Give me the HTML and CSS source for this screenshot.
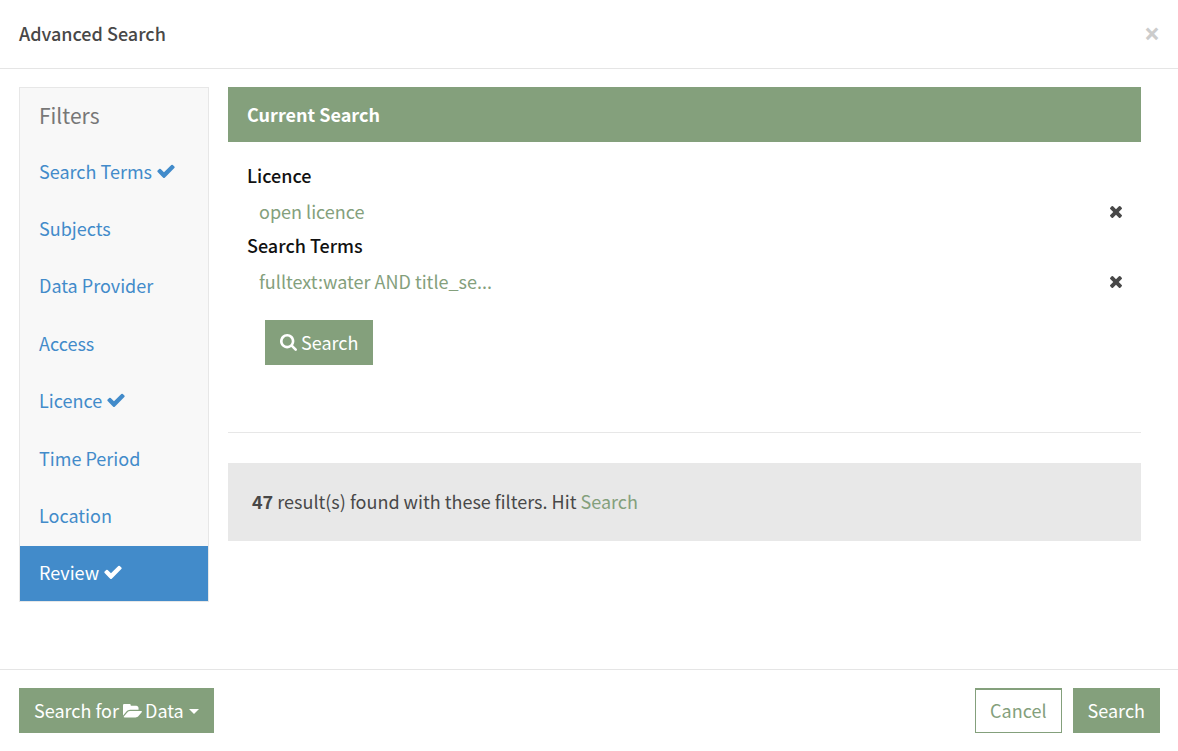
FILE: index.html
```html
<!DOCTYPE html>
<html lang="en">
<head>
<meta charset="utf-8">
<meta name="viewport" content="width=device-width, initial-scale=1">
<title>Advanced Search</title>
<link rel="stylesheet" href="styles.css">
</head>
<body>
<svg class="sprite" aria-hidden="true">
  <symbol id="check" viewBox="0 0 1792 1792"><path d="M1671 566q0 40-28 68l-724 724-136 136q-28 28-68 28t-68-28l-136-136-362-362q-28-28-28-68t28-68l136-136q28-28 68-28t68 28l294 295 656-657q28-28 68-28t68 28l136 136q28 28 28 68z"/></symbol>
  <symbol id="times" viewBox="302 366 1188 1188"><path d="M1490 1322q0 40-28 68l-136 136q-28 28-68 28t-68-28l-294-294-294 294q-28 28-68 28t-68-28l-136-136q-28-28-28-68t28-68l294-294-294-294q-28-28-28-68t28-68l136-136q28-28 68-28t68 28l294 294 294-294q28-28 68-28t68 28l136 136q28 28 28 68t-28 68l-294 294 294 294q28 28 28 68z"/></symbol>
  <symbol id="search" viewBox="64 128 1664 1664"><path d="M1216 832q0-185-131.500-316.500t-316.500-131.500-316.500 131.500-131.500 316.500 131.500 316.500 316.500 131.500 316.500-131.500 131.500-316.500zm512 832q0 52-38 90t-90 38q-54 0-90-38l-343-342q-179 124-399 124-143 0-273.500-55.500t-225-150-150-225-55.500-273.500 55.500-273.500 150-225 225-150 273.500-55.500 273.500 55.500 225 150 150 225 55.500 273.500q0 220-124 399l343 343q37 37 37 90z"/></symbol>
  <symbol id="folder" viewBox="0 256 1879 1280"><path d="M1879 952q0 31-31 66l-336 396q-43 51-120.500 86.500t-143.500 35.500h-1088q-34 0-60.500-13t-26.500-43q0-31 31-66l336-396q43-51 120.500-86.500t143.500-35.500h1088q34 0 60.500 13t26.500 43zm-343-344v160h-832q-94 0-197 47.500t-164 119.500l-337 396-5 6q0-4-.5-12.500t-.5-12.500v-960q0-92 66-158t158-66h320q92 0 158 66t66 158v32h544q92 0 158 66t66 158z"/></symbol>
</svg>
<div class="modal" role="dialog" aria-labelledby="title">
  <header class="modal-header">
    <h1 class="modal-title" id="title">Advanced Search</h1>
    <button class="close" type="button" aria-label="Close">×</button>
  </header>
  <main class="modal-body">
    <nav class="filters" aria-label="Filters">
      <h2 class="filters-title">Filters</h2>
      <ul class="filters-list">
        <li><a class="filter" href="#terms">Search Terms<svg class="icon-check"><use href="#check"/></svg></a></li>
        <li><a class="filter" href="#subjects">Subjects</a></li>
        <li><a class="filter" href="#provider">Data Provider</a></li>
        <li><a class="filter" href="#access">Access</a></li>
        <li><a class="filter" href="#licence">Licence<svg class="icon-check"><use href="#check"/></svg></a></li>
        <li><a class="filter" href="#time">Time Period</a></li>
        <li><a class="filter" href="#location">Location</a></li>
        <li><a class="filter filter-active" href="#review" aria-current="true">Review<svg class="icon-check"><use href="#check"/></svg></a></li>
      </ul>
    </nav>
    <section class="review">
      <h2 class="panel-heading">Current Search</h2>
      <div class="panel-content">
        <h3 class="term-title">Licence</h3>
        <div class="term"><a class="link" href="#licence">open licence</a><button class="remove" type="button" aria-label="Remove licence"><svg class="icon-times"><use href="#times"/></svg></button></div>
        <h3 class="term-title">Search Terms</h3>
        <div class="term"><a class="link" href="#terms">fulltext:water AND title_se...</a><button class="remove" type="button" aria-label="Remove search terms"><svg class="icon-times"><use href="#times"/></svg></button></div>
        <button class="btn btn-review" type="button"><svg class="icon-search"><use href="#search"/></svg>Search</button>
      </div>
      <p class="results"><strong>47</strong> result(s) found with these filters. Hit <a class="link" href="#search">Search</a></p>
    </section>
  </main>
  <footer class="modal-footer">
    <button class="btn" type="button">Search for<svg class="icon-folder"><use href="#folder"/></svg>Data<span class="caret"></span></button>
    <div class="actions">
      <button class="btn btn-outline" type="button">Cancel</button>
      <button class="btn" type="button">Search</button>
    </div>
  </footer>
</div>
</body>
</html>
```
FILE: styles.css
```css
* {
  box-sizing: border-box;
}

body {
  margin: 0;
  background: #fff;
  color: #484848;
  font: 18px/24px "Noto Sans CJK SC", "Open Sans", sans-serif;
}

h1, h2, h3, p, ul {
  margin: 0;
  padding: 0;
}

button {
  border: 0;
  padding: 0;
  background: none;
  color: inherit;
  font: inherit;
  cursor: pointer;
}

a {
  text-decoration: none;
}

svg {
  fill: currentColor;
  flex: none;
}

.sprite {
  display: none;
}

.modal {
  display: flex;
  flex-direction: column;
  min-height: 100vh;
}

.modal-header {
  display: flex;
  align-items: center;
  justify-content: space-between;
  min-height: 69px;
  padding: 0 18px 3px 19px;
  border-bottom: 1px solid #e5e5e5;
}

.modal-title {
  font-size: 18px;
  font-weight: 500;
}

.close {
  color: #ccc;
  font: 700 28px/28px "Open Sans", sans-serif;
}

.modal-body {
  display: flex;
  flex: 1;
  align-items: flex-start;
  gap: 19px;
  padding: 18px 37px 18px 19px;
}

.filters {
  flex: none;
  width: 190px;
  border: 1px solid #e7e7e7;
  background: #f8f8f8;
}

.filters-title {
  padding: 11px 19px 13px;
  color: #777;
  font-size: 21px;
  font-weight: 400;
  line-height: 32px;
}

.filters-list {
  display: flex;
  flex-direction: column;
  justify-content: space-between;
  min-height: 457px;
  list-style: none;
}

.filter {
  display: flex;
  align-items: center;
  gap: 4px;
  height: 55px;
  padding: 0 19px 2px;
  color: #428bca;
}

.filter-active {
  background: #428bca;
  color: #fff;
}

.icon-check {
  width: 20px;
  height: 20px;
}

.review {
  flex: 1;
  min-width: 0;
}

.panel-heading {
  padding: 0 19px;
  background: #84a07c;
  color: #fff;
  font-size: 18px;
  font-weight: 700;
  line-height: 55px;
}

.panel-content {
  padding: 16px 19px 67px;
  border-bottom: 1px solid #e7e7e7;
}

.term-title {
  color: #111;
  font-size: 18px;
  font-weight: 500;
  line-height: 35px;
}

.term {
  display: flex;
  align-items: center;
  justify-content: space-between;
  height: 35px;
  padding-left: 12px;
}

.link {
  color: #84a07c;
}

.remove {
  display: flex;
  padding-top: 2px;
}

.icon-times {
  width: 12px;
  height: 12px;
}

.btn {
  display: flex;
  align-items: center;
  height: 45px;
  padding: 0 15px 2px;
  background: #84a07c;
  color: #fff;
}

.btn-review {
  gap: 4px;
  margin: 22px 0 0 18px;
}

.btn-outline {
  padding: 0 14px 2px;
  border: 1px solid #84a07c;
  border-top-width: 2px;
  background: #fff;
  color: #84a07c;
}

.icon-search {
  width: 17px;
  height: 17px;
  margin-top: 2px;
}

.icon-folder {
  width: 19px;
  height: 14px;
  margin: 2px 3px 0 4px;
}

.caret {
  margin: 4px 0 0 5px;
  border: 5px solid transparent;
  border-top-color: currentColor;
  border-bottom: 0;
}

.results {
  margin-top: 30px;
  padding: 26px 24px 28px;
  background: #e8e8e8;
}

.modal-footer {
  display: flex;
  align-items: center;
  justify-content: space-between;
  padding: 18px 18px 18px 19px;
  border-top: 1px solid #e5e5e5;
}

.actions {
  display: flex;
  gap: 11px;
}
```
